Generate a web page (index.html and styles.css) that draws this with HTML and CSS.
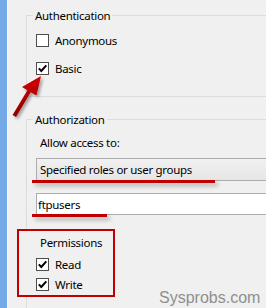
FILE: index.html
```html
<!DOCTYPE html>
<html lang="en">
  <head>
    <meta charset="UTF-8" />
    <title>FTP Authentication</title>
    <link rel="stylesheet" href="styles.css">
  </head>
  <body>
    <div class="window">
      <div class="side"></div>
      <div class="panel">
        <fieldset class="group group-auth">
          <legend>Authentication</legend>
          <label class="check"><span class="box"></span>Anonymous</label>
          <label class="check">
            <span class="box">
              <svg viewBox="0 0 11 11"><path d="M1.8 5.4 L4.3 8 L9.3 2.3" /></svg>
            </span>Basic
          </label>
        </fieldset>

        <fieldset class="group group-authz">
          <legend>Authorization</legend>
          <p class="label">Allow access to:</p>
          <div class="field field-select">
            Specified roles or user groups
            <span class="mark mark-long"></span>
          </div>
          <div class="field field-input">
            ftpusers
            <span class="mark mark-short"></span>
          </div>
          <div class="perms">
            <p class="label">Permissions</p>
            <label class="check">
              <span class="box">
                <svg viewBox="0 0 11 11"><path d="M1.8 5.4 L4.3 8 L9.3 2.3" /></svg>
              </span>Read
            </label>
            <label class="check">
              <span class="box">
                <svg viewBox="0 0 11 11"><path d="M1.8 5.4 L4.3 8 L9.3 2.3" /></svg>
              </span>Write
            </label>
          </div>
        </fieldset>
      </div>

      <!-- annotation arrow pointing at Basic -->
      <svg class="arrow" viewBox="0 0 60 70" width="60" height="70">
        <defs>
          <linearGradient id="arrowFill" x1="0" y1="0" x2="0" y2="1">
            <stop offset="0" stop-color="#d40000" />
            <stop offset="1" stop-color="#8e0000" />
          </linearGradient>
          <filter id="arrowShadow" x="-30%" y="-30%" width="160%" height="160%">
            <feDropShadow dx="2" dy="2" stdDeviation="1.5" flood-color="#000" flood-opacity="0.35" />
          </filter>
        </defs>
        <path
          d="M41 16 L22 27 L27.4 30.2 L12.6 55 L16 57 L30.8 32.2 L36.5 35.5 Z"
          fill="url(#arrowFill)"
          filter="url(#arrowShadow)"
        />
      </svg>

      <span class="watermark">Sysprobs.com</span>
    </div>
  </body>
</html>
```

FILE: styles.css
```css
* {
  margin: 0;
  padding: 0;
  box-sizing: border-box;
}

body {
  background-color: #f0f0f0;
  font-family: "Noto Sans", "Open Sans", sans-serif;
  font-size: 11.5px;
  letter-spacing: -0.3px;
  color: #000;
}

.window {
  position: relative;
  display: flex;
  width: 266px;
  height: 308px;
  overflow: hidden;
}

.side {
  width: 8px;
  flex-shrink: 0;
  background: #74a9e8;
  border-right: 1px solid #f7f7f7;
}

.panel {
  flex: 1;
  padding-left: 18px;
  margin-right: -20px;
}

.group {
  border: 1px solid #dcdcdc;
  border-right: none;
  padding: 0 0 0 9px;
}

.group legend {
  margin-left: -3px;
  padding: 0 2px;
  line-height: 15px;
}

.group-auth {
  margin-top: 8px;
  padding-top: 3px;
  padding-bottom: 14px;
}

.group-authz {
  margin-top: 15px;
  padding-bottom: 40px;
}

.check {
  display: flex;
  align-items: center;
  gap: 6px;
  height: 28px;
}

.box {
  display: flex;
  align-items: center;
  justify-content: center;
  width: 13px;
  height: 13px;
  background: #fff;
  border: 1px solid #4d4d4d;
}

.box svg {
  width: 11px;
  height: 11px;
  fill: none;
  stroke: #000;
  stroke-width: 2;
}

.label {
  line-height: 16px;
  padding-left: 4px;
}

.group-authz > .label {
  margin-top: 8px;
}

.field {
  position: relative;
  height: 23px;
  line-height: 21px;
  border: 1px solid #acacac;
}

.field-select {
  margin-top: 7px;
  padding-left: 3px;
  background: linear-gradient(#f0f0f0, #e6e6e6);
}

.field-input {
  margin-top: 12px;
  padding-left: 1px;
  height: 22px;
  background: #fff;
  border-color: #abadb3;
}

.mark {
  position: absolute;
  left: -5px;
  bottom: -3px;
  height: 3px;
  background: #c00000;
  box-shadow: 3px 3px 4px rgba(0, 0, 0, 0.3);
}

.mark-long {
  width: 183px;
}

.mark-short {
  width: 75px;
}

.perms {
  margin: 14px 0 0 -19px;
  width: 98px;
  height: 68px;
  padding: 4px 0 0 17px;
  border: 2px solid #c00000;
  background: #f0f0f0;
}

.perms .label {
  padding-left: 4px;
  margin-bottom: 3px;
}

.perms .check {
  height: 20px;
}

.arrow {
  position: absolute;
  left: 0;
  top: 60px;
}

.watermark {
  position: absolute;
  left: 159px;
  top: 290px;
  font-family: "Liberation Sans", Arial, sans-serif;
  font-size: 16px;
  line-height: 16px;
  letter-spacing: 0;
  color: #8f8f8f;
}
```
